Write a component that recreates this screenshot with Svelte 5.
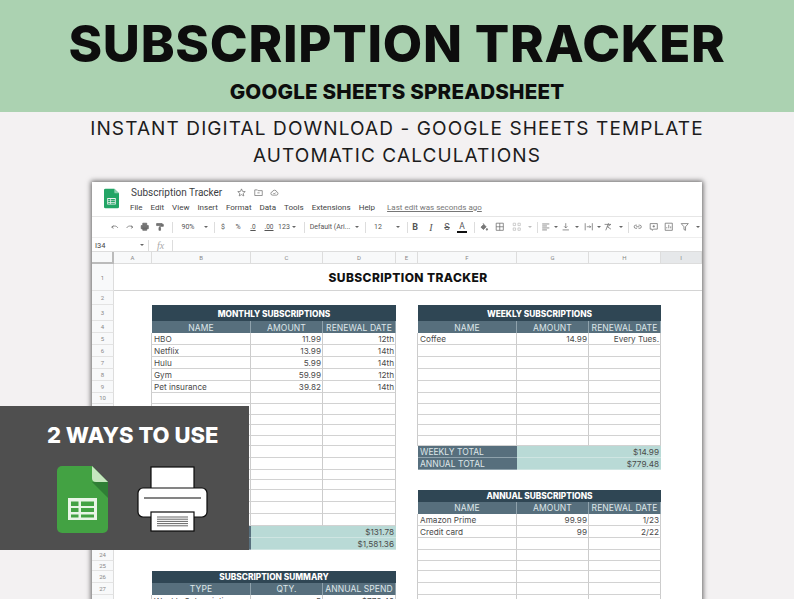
<script lang="ts">
  type Cell = { col: number; row: number; span?: number; text?: string; kind: string };

  const COL_LETTERS = ["A", "B", "C", "D", "E", "F", "G", "H", "I"];
  // sheet rows 1..28, heights eyeballed from the screenshot
  const ROW_H = [27, 14, 16, 12, 12, 12, 12, 12, 12, 10.5, 11, 10.5, 10.5, 10, 12, 12, 10, 10.5, 11.5, 12, 12, 12, 12, 11, 10, 12, 12, 12];

  const rowsCss = "12px " + ROW_H.map((h) => h + "px").join(" ");

  function table(col: number, row: number, title: string, heads: string[], body: string[][], blanks: number, totals: string[][] = []): Cell[] {
    const out: Cell[] = [{ col, row, span: 3, text: title, kind: "title" }];
    heads.forEach((h, i) => out.push({ col: col + i, row: row + 1, text: h, kind: "head" }));
    let r = row + 2;
    for (const line of body) {
      line.forEach((t, i) => out.push({ col: col + i, row: r, text: t, kind: i ? "num" : "txt" }));
      r++;
    }
    for (let b = 0; b < blanks; b++, r++) {
      for (let i = 0; i < 3; i++) out.push({ col: col + i, row: r, kind: "txt" });
    }
    for (const [label, val] of totals) {
      out.push({ col, row: r, text: label, kind: "label" });
      out.push({ col: col + 1, row: r, span: 2, text: val, kind: "total" });
      r++;
    }
    return out;
  }

  const heads = ["NAME", "AMOUNT", "RENEWAL DATE"];
  const cells: Cell[] = [
    ...table(3, 3, "MONTHLY SUBSCRIPTIONS", heads, [
      ["HBO", "11.99", "12th"],
      ["Netflix", "13.99", "14th"],
      ["Hulu", "5.99", "14th"],
      ["Gym", "59.99", "12th"],
      ["Pet insurance", "39.82", "14th"],
    ], 12, [["MONTHLY TOTAL", "$131.78"], ["ANNUAL TOTAL", "$1,581.36"]]),
    ...table(7, 3, "WEEKLY SUBSCRIPTIONS", heads, [["Coffee", "14.99", "Every Tues."]], 9, [["WEEKLY TOTAL", "$14.99"], ["ANNUAL TOTAL", "$779.48"]]),
    ...table(7, 19, "ANNUAL SUBSCRIPTIONS", heads, [
      ["Amazon Prime", "99.99", "1/23"],
      ["Credit card", "99", "2/22"],
    ], 6),
    ...table(3, 26, "SUBSCRIPTION SUMMARY", ["TYPE", "QTY.", "ANNUAL SPEND"], [["Weekly Subscriptions", "5", "$779.48"]], 0),
  ];

  const MENU = ["File", "Edit", "View", "Insert", "Format", "Data", "Tools", "Extensions", "Help"];

  // toolbar: icon path (12x12 box), text label, caret or separator, w = slot width
  const TOOLS: { w: number; d?: string; t?: string; sep?: boolean; caret?: boolean; cls?: string }[] = [
    { w: 15, d: "M2 6.5 4.5 4.5 M2 6.5 4.5 8 M2.5 6.5 C5 4.5 8 4.5 10 7.5" },
    { w: 16, d: "M10 6.5 7.5 4.5 M10 6.5 7.5 8 M9.5 6.5 C7 4.5 4 4.5 2 7.5" },
    { w: 14, d: "M3.5 4V1.5h5V4 M1.5 4.5h9v4h-9z M3.5 7.5h5v3h-5z", cls: "solid" },
    { w: 15, d: "M2 2h7v2.5H2z M9 3h1.5v2.5H6V7 M5 7h2v3.5H5z", cls: "solid" },
    { w: 10, sep: true },
    { w: 22, t: "90%" },
    { w: 14, caret: true },
    { w: 2, sep: true },
    { w: 16, t: "$" },
    { w: 14, t: "%" },
    { w: 16, t: ".0", cls: "small" },
    { w: 16, t: ".00", cls: "small" },
    { w: 14, t: "123" },
    { w: 6, caret: true },
    { w: 14, sep: true },
    { w: 38, t: "Default (Ari..." },
    { w: 16, caret: true },
    { w: 1, sep: true },
    { w: 24, t: "12" },
    { w: 16, caret: true },
    { w: 2, sep: true },
    { w: 14, t: "B", cls: "bold" },
    { w: 18, t: "I", cls: "ital" },
    { w: 14, t: "S", cls: "strike" },
    { w: 16, t: "A", cls: "color" },
    { w: 8, sep: true },
    { w: 12, d: "M2.5 6.5 6 3l3 3-3.5 3.5z M5 1.5 6.5 3 M10 8c.7 1 1 1.500 .7 2-.4.5-1.200.5-1.500 0-.2-.5.1-1 .8-2", cls: "solid" },
    { w: 20, d: "M1.500 1.500h9v9h-9z M6 1.500v9 M1.500 6h9" },
    { w: 14, d: "M1.500 1.500h3v3h-3z M7.500 1.500h3v3h-3z M1.500 7.500h3v3h-3z M7.500 7.500h3v3h-3z", cls: "faint" },
    { w: 12, caret: true, cls: "faint" },
    { w: 2, sep: true },
    { w: 16, d: "M1.500 2.500h9 M1.500 5h6 M1.500 7.500h9 M1.500 10h6" },
    { w: 4, caret: true },
    { w: 16, d: "M6 1.500v6 M4 5.500 6 7.500 8 5.500 M2 10h8" },
    { w: 6, caret: true },
    { w: 18, d: "M1.500 1.500v9 M10.500 1.500v9 M3.500 6h5 M7 4.500 8.500 6 7 7.500" },
    { w: 2, caret: true },
    { w: 16, d: "M2 3h8L5.500 6 10 9 M7 1.500 3.500 10.500" },
    { w: 10, caret: true },
    { w: 4, sep: true },
    { w: 16, d: "M5 4H3.500a2 2 0 0 0 0 4H5 M7 4h1.500a2 2 0 0 1 0 4H7 M4 6h4" },
    { w: 16, d: "M1.500 2h9v7H6L4 10.500V9H1.500z M6 4v3 M4.500 5.500h3" },
    { w: 14, d: "M1.500 1.500h9v9h-9z M3.500 8V6.500 M6 8V3.500 M8.500 8V5.500" },
    { w: 18, d: "M1.500 2h9L7 6v4.500L5 9.500V6z" },
    { w: 8, caret: true },
  ];
</script>

{#snippet sheetIcon(cls: string)}
  <svg class={cls} viewBox="0 0 51 67">
    <path class="doc" d="M5 0H35L51 16V62a5 5 0 0 1-5 5H5a5 5 0 0 1-5-5V5a5 5 0 0 1 5-5z" />
    <path class="fold-shadow" d="M35 16 51 32V16z" />
    <path class="fold" d="M35 0 51 16H39a4 4 0 0 1-4-4z" />
    <path class="tbl" d="M11 32H40V54H11zM14 35.500V40H21.500V35.500zM24 35.500V40H37V35.500zM14 42V46H21.500V42zM24 42V46H37V42zM14 48.500V51.500H21.500V48.500zM24 48.500V51.500H37V48.500z" fill-rule="evenodd" />
  </svg>
{/snippet}

<div class="page">
  <header class="banner">
    <h1>SUBSCRIPTION TRACKER</h1>
    <h2>GOOGLE SHEETS SPREADSHEET</h2>
  </header>

  <div class="tagline">
    <p>INSTANT DIGITAL DOWNLOAD - GOOGLE SHEETS TEMPLATE</p>
    <p>AUTOMATIC CALCULATIONS</p>
  </div>

  <section class="window">
    <div class="docbar">
      {@render sheetIcon("logo")}
      <div class="docinfo">
        <div class="docname">
          <span class="name">Subscription Tracker</span>
          <svg class="mini" viewBox="0 0 12 12"><path d="M6 1.200 7.400 4.500 11 4.800 8.300 7.100 9.100 10.600 6 8.800 2.900 10.600 3.700 7.100 1 4.800 4.600 4.500z" /></svg>
          <svg class="mini" viewBox="0 0 12 12"><path d="M1 2.500h3.500L5.500 3.500H11v6.500H1z M4.500 6.500h3" /></svg>
          <svg class="mini" viewBox="0 0 12 12"><path d="M3.500 9.500a2.200 2.200 0 0 1-.3-4.400A3 3 0 0 1 9 5.200a2.200 2.200 0 0 1-.2 4.300z M4.500 6.800 5.700 8l2-2" /></svg>
        </div>
        <nav class="menu">
          {#each MENU as m}<span>{m}</span>{/each}
          <span class="saved">Last edit was seconds ago</span>
        </nav>
      </div>
    </div>

    <div class="toolbar">
      {#each TOOLS as t}
        <div class="tool {t.cls ?? ''}" style:width="{t.w}px">
          {#if t.sep}
            <i class="sep"></i>
          {:else if t.caret}
            <i class="caret"></i>
          {:else if t.d}
            <svg viewBox="0 0 12 12"><path d={t.d} /></svg>
          {:else}
            <span>{t.t}</span>
          {/if}
        </div>
      {/each}
    </div>

    <div class="formula">
      <span class="ref">I34</span>
      <i class="caret"></i>
      <i class="sep"></i>
      <span class="fx">fx</span>
      <i class="sep"></i>
    </div>

    <div class="grid" style:grid-template-rows={rowsCss}>
      <div class="corner"></div>
      {#each COL_LETTERS as c, i}
        <div class="colhead" class:active={c === "I"} style:grid-area="1 / {i + 2}">{c}</div>
      {/each}
      {#each ROW_H as _, i}
        <div class="rowhead" style:grid-area="{i + 2} / 1">{i + 1}</div>
      {/each}
      <div class="sheet-title">SUBSCRIPTION TRACKER</div>
      {#each cells as c}
        <div class="cell {c.kind}" style:grid-area="{c.row + 1} / {c.col} / auto / span {c.span ?? 1}">{c.text ?? ""}</div>
      {/each}
    </div>
  </section>

  <aside class="ways">
    <h3>2 WAYS TO USE</h3>
    <div class="ways-icons">
      {@render sheetIcon("big")}
      <svg class="printer" viewBox="0 0 72 66">
        <rect x="14" y="1" width="43" height="23" />
        <rect x="1" y="22" width="69" height="29" rx="5" />
        <path d="M7 32H64" />
        <rect x="14" y="46" width="43" height="19" />
        <path class="feed" d="M20 51H51M20 53.200H51M20 55.400H51M20 57.600H51M20 59.800H51" />
      </svg>
    </div>
  </aside>
</div>

<style>
  :global(body) {
    margin: 0;
  }
  .page {
    position: relative;
    width: 794px;
    height: 599px;
    overflow: hidden;
    background: #f3f1f2;
    font-family: "Inter", "Liberation Sans", sans-serif;
    display: flex;
    flex-direction: column;
  }

  .banner {
    height: 112px;
    flex: none;
    box-sizing: border-box;
    padding-top: 11px;
    background: #abd2b1;
    text-align: center;
    color: #0d0d0d;
  }
  h1 {
    margin: 0;
    font-size: 51px;
    line-height: 66px;
    font-weight: 800;
    letter-spacing: 0.75px;
  }
  h2 {
    margin: 1.500px 0 0;
    font-size: 20.600px;
    line-height: 26px;
    font-weight: 800;
    letter-spacing: 0.2px;
  }

  .tagline {
    flex: none;
    padding-top: 3px;
    text-align: center;
    font-size: 19px;
    line-height: 27px;
    letter-spacing: 1.100px;
    color: #1c1c1c;
  }
  .tagline p {
    margin: 0;
  }

  .window {
    flex: none;
    width: 610px;
    margin: 13px 0 0 92px;
    background: #fff;
    box-shadow: 0 0 5px 1px rgba(0, 0, 0, 0.6);
    font-family: "Roboto", "Liberation Sans", sans-serif;
    color: #444;
  }

  .docbar {
    height: 34px;
    display: flex;
    padding: 6px 0 0 12px;
    box-sizing: border-box;
  }
  .logo {
    width: 15px;
    height: 21px;
    flex: none;
  }
  .logo .doc {
    fill: #23a566;
  }
  .logo .fold-shadow {
    fill: #23a566;
  }
  .logo .fold {
    fill: #8ed1b1;
  }
  .logo .tbl {
    fill: #f1f1f1;
  }
  .docinfo {
    margin-left: 11px;
  }
  .docname {
    display: flex;
    align-items: center;
    height: 11px;
    margin-top: -1px;
    padding-left: 1px;
  }
  .name {
    font-size: 10px;
    width: 106px;
    color: #3c4043;
    white-space: nowrap;
  }
  .mini {
    width: 9px;
    height: 9px;
    margin-right: 7.500px;
    fill: none;
    stroke: #666;
    stroke-width: 0.9;
  }
  .menu {
    display: flex;
    gap: 8px;
    margin-top: 4px;
    font-size: 8px;
    line-height: 11px;
    color: #444;
  }
  .saved {
    margin-left: 4px;
    color: #777;
    text-decoration: underline;
  }

  .toolbar {
    height: 22px;
    box-sizing: border-box;
    padding-left: 15px;
    display: flex;
    align-items: center;
    border-top: 1px solid #e6e6e6;
    border-bottom: 1px solid #eee;
    font-size: 7px;
    color: #555;
    white-space: nowrap;
  }
  .tool {
    flex: none;
    display: flex;
    align-items: center;
    justify-content: center;
    height: 12px;
  }
  .tool svg {
    width: 9.500px;
    height: 9.500px;
    flex: none;
    fill: none;
    stroke: #666;
    stroke-width: 0.9;
  }
  .tool span,
  .tool i {
    flex: none;
  }
  .tool.solid svg {
    fill: #777;
    stroke: #666;
  }
  .tool.faint svg {
    stroke: #bbb;
  }
  .tool.faint .caret {
    border-top-color: #bbb;
  }
  .tool.small {
    font-size: 6.500px;
    text-decoration: underline;
  }
  .tool.bold {
    font-weight: 700;
    font-size: 9px;
  }
  .tool.ital {
    font-style: italic;
    font-family: "Liberation Serif", serif;
    font-size: 10px;
  }
  .tool.strike {
    font-size: 9px;
    text-decoration: line-through;
  }
  .tool.color span {
    font-size: 8.500px;
    line-height: 9px;
    border-bottom: 2px solid #111;
    padding: 0 2px;
  }
  .sep {
    display: block;
    width: 1px;
    height: 11px;
    background: #ddd;
  }
  .caret {
    display: block;
    width: 0;
    height: 0;
    border: 2px solid transparent;
    border-top: 2.500px solid #666;
    border-bottom: 0;
  }

  .formula {
    height: 14px;
    display: flex;
    align-items: center;
    font-size: 7.500px;
    color: #444;
    box-sizing: border-box;
  }
  .ref {
    width: 48px;
    padding-left: 3px;
    box-sizing: border-box;
  }
  .formula .caret {
    margin-right: 4px;
  }
  .fx {
    width: 23px;
    text-align: center;
    font-family: "Liberation Serif", serif;
    font-style: italic;
    font-size: 10px;
    color: #aaa;
  }

  .grid {
    display: grid;
    grid-template-columns: 22px 38px 99px 72px 73px 22px 99px 72px 72px 41px;
    border-top: 1px solid #ddd;
    margin-top: -1px;
    position: relative;
    background: #fff;
  }
  .corner {
    grid-area: 1 / 1;
    background: #f8f9fa;
    border-right: 2px solid #bbb;
    border-bottom: 2px solid #bbb;
    box-sizing: border-box;
  }
  .colhead {
    background: #f8f9fa;
    border-right: 1px solid #ddd;
    border-bottom: 1px solid #ddd;
    box-sizing: border-box;
    font-size: 6px;
    line-height: 11px;
    text-align: center;
    color: #888;
  }
  .colhead.active {
    background: #e6e8ea;
  }
  .rowhead {
    background: #f8f9fa;
    border-right: 1px solid #ddd;
    border-bottom: 1px solid #e3e3e3;
    box-sizing: border-box;
    font-size: 6px;
    display: flex;
    align-items: center;
    justify-content: center;
    color: #888;
    overflow: hidden;
  }
  .sheet-title {
    grid-area: 2 / 2 / auto / span 9;
    border-bottom: 1px solid #d4d4d4;
    box-sizing: border-box;
    display: flex;
    align-items: center;
    justify-content: center;
    font-family: "Inter", sans-serif;
    font-size: 12px;
    font-weight: 800;
    letter-spacing: 0.4px;
    color: #111;
  }

  .cell {
    font-family: "Inter", sans-serif;
    font-size: 8.200px;
    box-sizing: border-box;
    display: flex;
    align-items: center;
    padding: 1px 2px 0;
    color: #4a4a4a;
    white-space: nowrap;
    overflow: hidden;
    border-right: 1px solid #ccc;
    border-bottom: 1px solid #d2d2d2;
    min-height: 0;
  }
  .cell.txt {
    border-left: 1px solid #ccc;
    margin-left: -1px;
  }
  .cell.num {
    justify-content: flex-end;
    padding-right: 1px;
  }
  .cell.title {
    justify-content: center;
    background: #2f4654;
    color: #fff;
    font-weight: 800;
    font-size: 8.300px;
    border: 0;
  }
  .cell.head {
    justify-content: center;
    background: #576f7d;
    color: #dfe7ea;
    font-size: 8.500px;
    letter-spacing: 0.1px;
    border: 0;
    border-right: 1px solid #8fa2ac;
  }
  .cell.label {
    background: #576f7d;
    color: #dfe7ea;
    font-size: 8.500px;
    border: 0;
    border-bottom: 1px solid #8fa2ac;
  }
  .cell.total {
    justify-content: flex-end;
    background: #b9dad6;
    border: 0;
    border-bottom: 1px solid #cfe5e2;
  }

  .ways {
    position: absolute;
    left: 0;
    top: 406px;
    width: 249px;
    height: 144px;
    background: #4f4f4f;
    box-sizing: border-box;
    padding: 15px 0 0 0;
    color: #fff;
  }
  h3 {
    margin: 0 0 0 47px;
    font-size: 22px;
    line-height: 28px;
    font-weight: 800;
    white-space: nowrap;
  }
  .ways-icons {
    display: flex;
    gap: 29px;
    margin: 17px 0 0 57px;
    align-items: flex-start;
  }
  .big {
    width: 51px;
    height: 67px;
    flex: none;
  }
  .big .doc {
    fill: #43a243;
  }
  .big .fold-shadow {
    fill: #2f7f35;
  }
  .big .fold {
    fill: #c6e7bf;
  }
  .big .tbl {
    fill: #e9f5e6;
  }
  .printer {
    width: 72px;
    height: 66px;
    flex: none;
  }
  .printer rect {
    fill: #fff;
    stroke: #0b0b0b;
    stroke-width: 1.200;
  }
  .printer path {
    fill: none;
    stroke: #0b0b0b;
    stroke-width: 1.200;
  }
  .printer .feed {
    stroke: #666;
    stroke-width: 1;
  }
</style>
